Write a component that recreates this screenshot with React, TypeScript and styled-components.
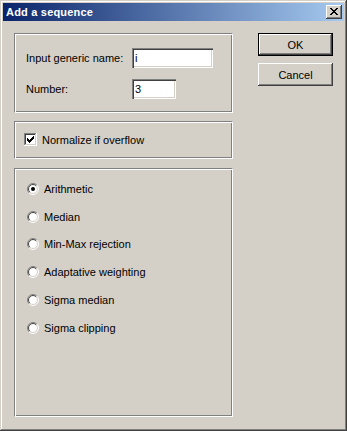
import React from "react";
import styled, { createGlobalStyle } from "styled-components";

const Global = createGlobalStyle`
  html, body { margin: 0; padding: 0; background: #d4d0c8; }
  body { font-family: "Liberation Sans", Arial, sans-serif; font-size: 11px; color: #000; }
  * { box-sizing: border-box; }
`;

const Window = styled.div`
  width: 347px;
  height: 431px;
  background: #d4d0c8;
  padding: 3px;
  display: flex;
  flex-direction: column;
  box-shadow: inset -1px -1px 0 #404040, inset 1px 1px 0 #d4d0c8,
    inset -2px -2px 0 #808080, inset 2px 2px 0 #ffffff;
`;

const TitleBar = styled.div`
  height: 18px;
  margin-bottom: 1px;
  display: flex;
  align-items: center;
  justify-content: space-between;
  padding: 0 2px 0 3px;
  background: linear-gradient(to right, #0a246a, #a6caf0);
`;

const TitleText = styled.span`
  color: #fff;
  font-weight: bold;
  font-size: 11px;
  line-height: 18px;
  letter-spacing: 0.2px;
`;

const CloseButton = styled.div`
  width: 16px;
  height: 14px;
  background: #d4d0c8;
  display: flex;
  align-items: center;
  justify-content: center;
  box-shadow: inset -1px -1px 0 #404040, inset 1px 1px 0 #ffffff,
    inset -2px -2px 0 #808080, inset 2px 2px 0 #d4d0c8;
`;

const Client = styled.div`
  flex: 1;
  display: flex;
  padding: 11px;
  gap: 25px;
`;

const LeftColumn = styled.div`
  width: 219px;
  display: flex;
  flex-direction: column;
`;

const RightColumn = styled.div`
  width: 75px;
  display: flex;
  flex-direction: column;
  gap: 7px;
`;

const Group = styled.div<{ $h: number; $mb?: number }>`
  height: ${(p) => p.$h}px;
  margin-bottom: ${(p) => p.$mb ?? 0}px;
  border-top: 1px solid #808080;
  border-left: 1px solid #808080;
  border-right: 1px solid #ffffff;
  border-bottom: 1px solid #ffffff;
  box-shadow: inset 1px 1px 0 #ffffff, inset -1px -1px 0 #808080;
`;

const FieldGrid = styled.div`
  display: grid;
  grid-template-columns: 106px auto;
  row-gap: 11px;
  padding: 14px 0 0 11px;
  align-items: center;
`;

const Label = styled.span`
  line-height: 20px;
`;

const TextInput = styled.div<{ $w: number }>`
  width: ${(p) => p.$w}px;
  height: 20px;
  background: #fff;
  padding-left: 3px;
  line-height: 20px;
  box-shadow: inset 1px 1px 0 #808080, inset 2px 2px 0 #404040,
    inset -1px -1px 0 #ffffff, inset -2px -2px 0 #d4d0c8;
`;

const CheckRow = styled.div`
  display: flex;
  align-items: center;
  gap: 5px;
  padding: 11px 0 0 9px;
`;

const RadioList = styled.div`
  display: flex;
  flex-direction: column;
  padding: 6px 0 0 12px;
`;

const RadioRow = styled.div`
  height: 27.8px;
  display: flex;
  align-items: center;
  gap: 5px;
`;

const Button = styled.div<{ $default?: boolean }>`
  width: 75px;
  height: 23px;
  display: flex;
  align-items: center;
  justify-content: center;
  background: #d4d0c8;
  ${(p) =>
    p.$default
      ? `box-shadow: inset 0 0 0 1px #000000, inset -2px -2px 0 #404040, inset 2px 2px 0 #ffffff, inset -3px -3px 0 #808080;`
      : `box-shadow: inset -1px -1px 0 #404040, inset 1px 1px 0 #ffffff, inset -2px -2px 0 #808080;`}
`;

const xPixels: [number, number][] = [];
const xRows = [
  [0, 1, 6, 7],
  [1, 2, 5, 6],
  [2, 3, 4, 5],
  [3, 4],
  [2, 3, 4, 5],
  [1, 2, 5, 6],
  [0, 1, 6, 7],
];
xRows.forEach((cols, y) => cols.forEach((x) => xPixels.push([x, y])));

const CloseGlyph = () => (
  <svg width="8" height="7" viewBox="0 0 8 7" shapeRendering="crispEdges" style={{ marginLeft: -1, marginTop: -1 }}>
    {xPixels.map(([x, y]) => (
      <rect key={`${x}-${y}`} x={x} y={y} width={1} height={1} fill="#000" />
    ))}
  </svg>
);

const checkCols: [number, number][] = [
  [3, 5],
  [4, 6],
  [5, 7],
  [6, 6],
  [7, 5],
  [8, 4],
  [9, 3],
];

const CheckBox = ({ checked }: { checked: boolean }) => (
  <svg width="13" height="13" viewBox="0 0 13 13" shapeRendering="crispEdges">
    <rect x="0" y="0" width="13" height="13" fill="#ffffff" />
    <rect x="0" y="0" width="12" height="1" fill="#808080" />
    <rect x="0" y="0" width="1" height="12" fill="#808080" />
    <rect x="1" y="1" width="10" height="1" fill="#404040" />
    <rect x="1" y="1" width="1" height="10" fill="#404040" />
    <rect x="1" y="11" width="11" height="1" fill="#d4d0c8" />
    <rect x="11" y="1" width="1" height="11" fill="#d4d0c8" />
    {checked &&
      checkCols.map(([x, y]) => <rect key={x} x={x} y={y} width={1} height={3} fill="#000" />)}
  </svg>
);

const arc = (r: number, from: "bl" | "tr") => {
  const d = r * Math.SQRT1_2;
  const bl = `${6 - d} ${6 + d}`;
  const tr = `${6 + d} ${6 - d}`;
  return from === "bl" ? `M${bl} A${r} ${r} 0 0 1 ${tr}` : `M${tr} A${r} ${r} 0 0 1 ${bl}`;
};

const Radio = ({ checked }: { checked: boolean }) => (
  <svg width="12" height="12" viewBox="0 0 12 12">
    <circle cx="6" cy="6" r="5" fill="#ffffff" />
    <path d={arc(5.5, "bl")} stroke="#808080" strokeWidth="1" fill="none" />
    <path d={arc(4.5, "bl")} stroke="#404040" strokeWidth="1" fill="none" />
    <path d={arc(5.5, "tr")} stroke="#ffffff" strokeWidth="1" fill="none" />
    <path d={arc(4.5, "tr")} stroke="#d4d0c8" strokeWidth="1" fill="none" />
    {checked && <circle cx="6" cy="6" r="2" fill="#000" />}
  </svg>
);

const methods = [
  "Arithmetic",
  "Median",
  "Min-Max rejection",
  "Adaptative weighting",
  "Sigma median",
  "Sigma clipping",
];

export default function App() {
  return (
    <>
      <Global />
      <Window>
        <TitleBar>
          <TitleText>Add a sequence</TitleText>
          <CloseButton>
            <CloseGlyph />
          </CloseButton>
        </TitleBar>
        <Client>
          <LeftColumn>
            <Group $h={80} $mb={8}>
              <FieldGrid>
                <Label>Input generic name:</Label>
                <TextInput $w={81}>i</TextInput>
                <Label>Number:</Label>
                <TextInput $w={44}>3</TextInput>
              </FieldGrid>
            </Group>
            <Group $h={38} $mb={9}>
              <CheckRow>
                <CheckBox checked />
                <span>Normalize if overflow</span>
              </CheckRow>
            </Group>
            <Group $h={249}>
              <RadioList>
                {methods.map((m, i) => (
                  <RadioRow key={m}>
                    <Radio checked={i === 0} />
                    <span>{m}</span>
                  </RadioRow>
                ))}
              </RadioList>
            </Group>
          </LeftColumn>
          <RightColumn>
            <Button $default>OK</Button>
            <Button>Cancel</Button>
          </RightColumn>
        </Client>
      </Window>
    </>
  );
}
